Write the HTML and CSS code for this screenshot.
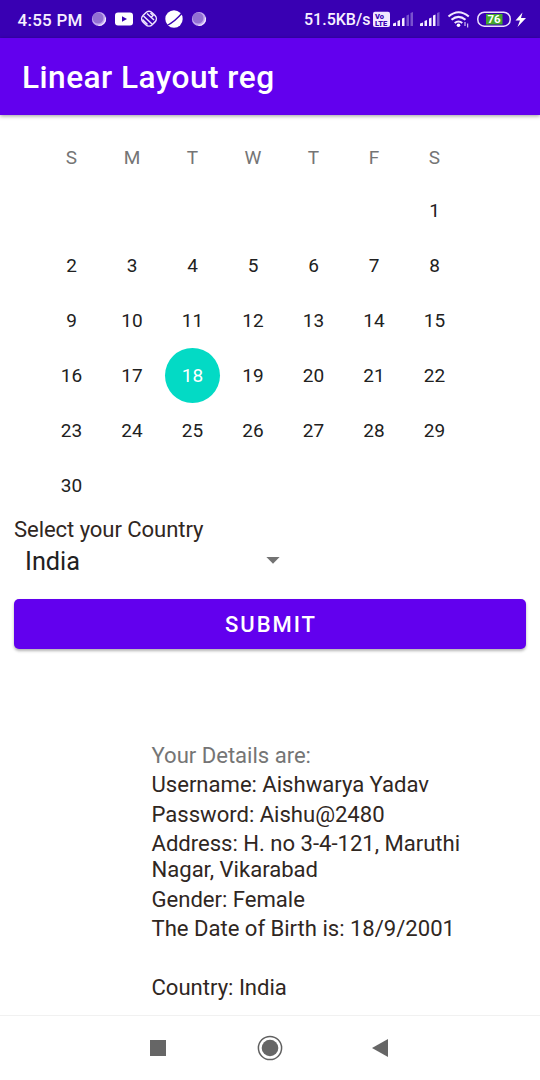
FILE: index.html
```html
<!DOCTYPE html>
<html lang="en">
<head>
<meta charset="utf-8">
<title>Linear Layout reg</title>
<link rel="stylesheet" href="styles.css">
</head>
<body>
<div class="screen">
  <header class="status">
    <span class="time">4:55 PM</span>
    <svg class="left-icons" width="116" height="20" viewBox="0 0 116 20">
      <g id="orb"><circle cx="8" cy="10" r="7.1" fill="#c3aaf0"/><circle cx="7" cy="9" r="5.5" fill="#9270d3"/><path d="M14.5 8.5a7 7 0 0 1-7 8" fill="none" stroke="#f2e9ff" stroke-width="1.2"/></g>
      <rect x="24" y="3.5" width="18" height="13" rx="3" fill="#fff"/><path d="M31 7.2l5 2.8-5 2.8z" fill="#3900b3"/>
      <g fill="none" stroke="#f0e6ff" stroke-width="1.5"><rect x="51.500" y="3.200" width="13" height="13" rx="4.5" transform="rotate(45 58 9.700)"/><path d="M56 4.500l7 6.500M52.500 7l8.500 8M59.500 4l2.500 2.500-2 2M51.500 10.500l5 5"/></g>
      <circle cx="83" cy="10" r="8.700" fill="#fff"/><path d="M76 16.500Q84 12.500 91.500 3.500" fill="none" stroke="#3900b3" stroke-width="1.300"/>
      <use href="#orb" x="100"/>
    </svg>
    <span class="speed">51.5KB/s</span>
    <svg class="right-icons" width="156" height="22" viewBox="372 8 156 22">
      <rect x="373" y="11.700" width="17" height="15.300" rx="2" fill="#f1e7ff"/>
      <text x="375" y="18.700" class="volte">Vo</text><text x="375" y="25.600" class="volte">LTE</text>
      <g fill="#f5edff"><path d="M393 26v-2.500l3-1V26zM397.500 26v-5l2.500-1v6zM402 26v-7.500l2.500-1V26z"/><path d="M406.500 26V15.500l2.500-1V26zM410.500 26V13l2.500-1v14z" fill="#7952ce"/>
      <path d="M420 26v-2.500l3-1V26zM424.500 26v-5l2.500-1v6zM429 26v-7.500l2.500-1V26zM433 26V15.500l2.500-1V26z"/><path d="M437 26V13l2.500-1v14z" fill="#7952ce"/></g>
      <g fill="none" stroke="#f2e8ff" stroke-width="2.100"><path d="M448.500 16.500Q458.500 8 468.800 16.500M451.500 19.800q7-6 14 0M454.700 23q3.800-3 7.600 0"/><path d="M465 22v4M467.700 23.500v4" stroke-width="1"/></g><circle cx="458.500" cy="25.300" r="1.800" fill="#fff"/>
      <rect x="477.800" y="12.200" width="32.400" height="14" rx="6.500" fill="#3900b3" stroke="#ecdfff" stroke-width="1.500"/><path d="M486 14h16.500v10.500H486z" fill="#43a72c"/><text x="487.500" y="23.300" class="battery">76</text>
      <path d="M522.500 12.500l-7 8h4.500l-2.500 6.500 8.500-9h-5z" fill="#fff"/>
    </svg>
  </header>
  <div class="toolbar"><h1>Linear Layout reg</h1></div>
  <main>
    <div class="calendar">
      <div class="weekdays"><span>S</span><span>M</span><span>T</span><span>W</span><span>T</span><span>F</span><span>S</span></div>
      <div class="days">
        <span class="first">1</span><span>2</span><span>3</span><span>4</span><span>5</span><span>6</span><span>7</span><span>8</span><span>9</span><span>10</span><span>11</span><span>12</span><span>13</span><span>14</span><span>15</span><span>16</span><span>17</span><span class="selected">18</span><span>19</span><span>20</span><span>21</span><span>22</span><span>23</span><span>24</span><span>25</span><span>26</span><span>27</span><span>28</span><span>29</span><span>30</span>
      </div>
    </div>
    <label class="label">Select your Country</label>
    <div class="spinner"><span>India</span><svg width="14" height="7" viewBox="0 0 14 7"><path d="M.4 0h13.200L7 6.800z" fill="#737373"/></svg></div>
    <button class="submit">SUBMIT</button>
    <section class="details">
      <p class="heading">Your Details are:</p>
      <p>Username: Aishwarya Yadav</p>
      <p>Password: Aishu@2480</p>
      <p>Address: H. no 3-4-121, Maruthi Nagar, Vikarabad</p>
      <p>Gender: Female</p>
      <p>The Date of Birth is: 18/9/2001</p>
      <p class="country">Country: India</p>
    </section>
  </main>
  <nav class="navbar">
    <svg width="16" height="16"><rect width="16" height="16" fill="#666"/></svg>
    <svg class="home" width="26" height="26"><circle cx="13" cy="13" r="11.600" fill="none" stroke="#606060" stroke-width="1.500"/><circle cx="13" cy="13" r="8.300" fill="#666"/></svg>
    <svg width="16" height="18"><path d="M0 9L16 0v18z" fill="#666"/></svg>
  </nav>
</div>
</body>
</html>
```
FILE: styles.css
```css
* { box-sizing: border-box; }
body { margin: 0; font-family: Roboto, sans-serif; background: #fff; }
.screen { width: 540px; height: 1080px; display: flex; flex-direction: column; overflow: hidden; }
.status { flex: none; height: 38px; background: #3900b3; color: #f7f0ff; display: flex; align-items: center; padding-left: 17px; font-size: 17px; font-weight: 500; white-space: nowrap; }
.time { width: 74px; padding: 1px 0 0 .5px; letter-spacing: .25px; }
.left-icons { flex: none; }
.speed { margin-left: 97px; width: 68px; font-size: 16px; padding-top: 1px; }
.right-icons { flex: none; }
.volte { font: 900 7.500px Roboto, sans-serif; fill: #3900b3; }
.battery { font: 700 11.500px Roboto, sans-serif; fill: #fff; }
.toolbar { flex: none; height: 77px; background: #6200ee; box-shadow: 0 1px 4px rgba(0,0,0,.4); padding: 2px 22px 0; display: flex; align-items: center; }
h1 { margin: 0; color: #fff; font-size: 31.600px; font-weight: 500; letter-spacing: .480px; }
main { flex: 1; padding: 28px 14px 0; display: flex; flex-direction: column; min-height: 0; }
.calendar { width: 423.500px; margin-left: 27.250px; font-size: 19px; color: #212121; }
.weekdays, .days { display: grid; grid-template-columns: repeat(7, 60.500px); text-align: center; }
.weekdays { height: 40px; line-height: 30px; color: #757575; }
.days { grid-auto-rows: 55px; line-height: 55px; }
.first { grid-column: 7; }
.selected { width: 55px; height: 55px; justify-self: center; border-radius: 50%; background: #03dac5; color: #fff; }
.label { font-size: 22.100px; letter-spacing: -.080px; line-height: 26px; color: #30271f; margin-top: 3px; }
.spinner { height: 38px; width: 265.500px; padding-left: 11px; display: flex; justify-content: space-between; align-items: center; font-size: 25.300px; color: #212121; }
.spinner svg { margin-bottom: 2px; }
.submit { flex: none; height: 50px; margin-top: 18.500px; border: 0; border-radius: 5px; background: #6200ee; color: #fff; font: 500 22px Roboto, sans-serif; letter-spacing: 1.970px; padding: 2px 0 0 2px; box-shadow: 0 2px 3px rgba(0,0,0,.3); }
.details { margin: 93.500px 0 0 137.500px; width: 340px; font-size: 22.100px; letter-spacing: -.020px; line-height: 26px; color: #30271f; }
.details p { margin: 0 0 3.400px; }
.details .heading { color: #757575; }
.details .country { margin-top: 32.900px; }
.navbar { flex: none; height: 65px; border-top: 1px solid #f1f1f1; padding: 0 152px 1px 150px; display: flex; align-items: center; justify-content: space-between; }
.home { margin-left: 2px; }
```
